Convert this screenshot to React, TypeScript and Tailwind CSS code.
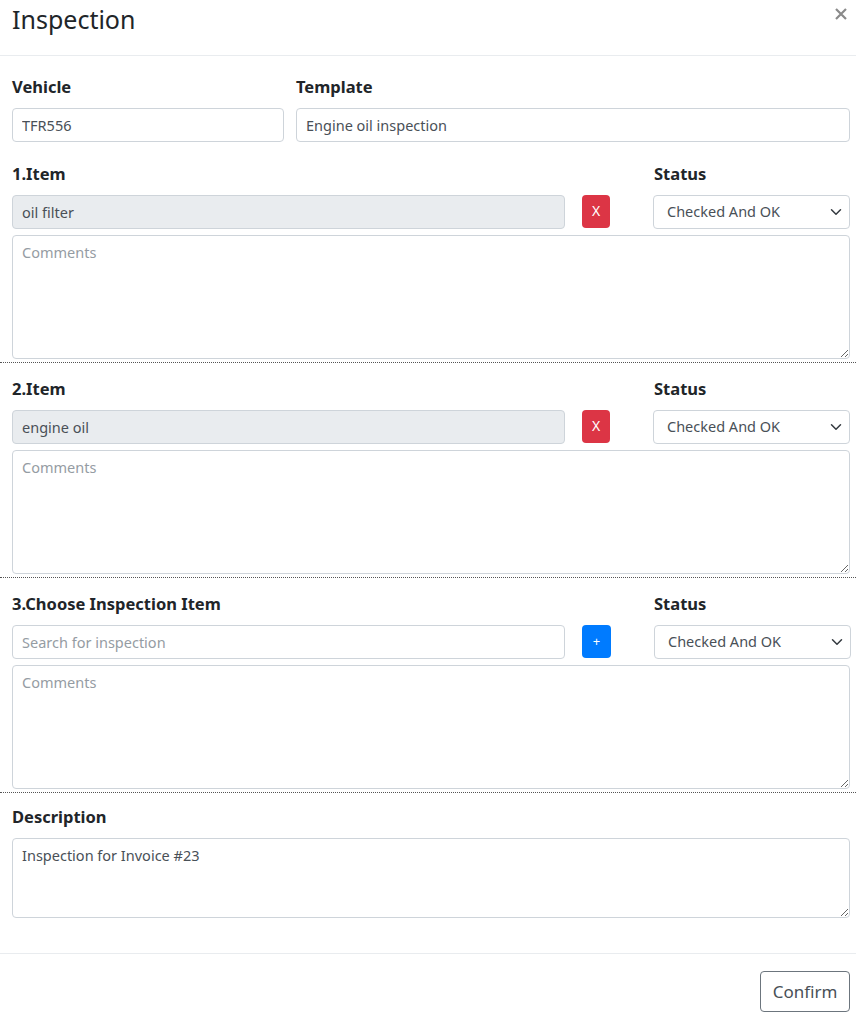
import React from "react";

const font = { fontFamily: '"Noto Sans", "Open Sans", sans-serif' };

function Chevron() {
  return (
    <svg width="12" height="12" viewBox="0 0 16 16" className="absolute right-[8px] top-1/2 -translate-y-1/2 pointer-events-none">
      <path d="M2 5l6 6 6-6" fill="none" stroke="#343a40" strokeWidth="2" strokeLinecap="round" strokeLinejoin="round" />
    </svg>
  );
}

function StatusSelect() {
  return (
    <div className="relative w-[197px]">
      <select
        defaultValue="ok"
        className="appearance-none w-full h-[34px] rounded-[4px] border border-[#ced4da] bg-white pl-[13px] pr-8 text-[14.5px] text-[#495057] outline-none"
      >
        <option value="ok">Checked And OK</option>
        <option value="fix">Needs Attention</option>
      </select>
      <Chevron />
    </div>
  );
}

function ItemSection({
  title,
  value,
  placeholder,
  readOnly,
  btn,
}: {
  title: string;
  value?: string;
  placeholder?: string;
  readOnly: boolean;
  btn: "x" | "plus";
}) {
  return (
    <div className="-ml-3 -mr-[6px] pl-3 pr-[6px] pt-[14px] pb-[3px] border-b border-dotted border-[#555]">
      <div className="flex">
        <div className="w-[553px] shrink-0 text-[16.5px] font-bold leading-[24px] text-[#212529]">{title}</div>
        <div className="ml-[89px] text-[16.5px] font-bold leading-[24px] text-[#212529]">Status</div>
      </div>
      <div className="flex items-center mt-[9px]">
        <input
          readOnly={readOnly}
          defaultValue={value}
          placeholder={placeholder}
          className={`w-[553px] shrink-0 h-[34px] rounded-[4px] border border-[#ced4da] px-[9px] text-[14.5px] text-[#495057] placeholder:text-[#959ca3] outline-none ${
            readOnly ? "bg-[#e9ecef]" : "bg-white"
          }`}
        />
        {btn === "x" ? (
          <button className="ml-[17px] shrink-0 w-[28px] h-[33px] -mt-[2px] rounded-[4px] bg-[#dc3545] text-white text-[14px] leading-none">
            X
          </button>
        ) : (
          <button className="ml-[17px] shrink-0 w-[29px] h-[33px] -mt-[2px] rounded-[4px] bg-[#007bff] text-white text-[13px] leading-none">
            +
          </button>
        )}
        <div className="ml-[43px] shrink-0">
          <StatusSelect />
        </div>
      </div>
      <textarea
        placeholder="Comments"
        className="block w-full h-[124px] mt-[6px] rounded-[4px] border border-[#ced4da] px-[9px] py-[6px] text-[14.5px] text-[#495057] placeholder:text-[#959ca3] outline-none"
      />
    </div>
  );
}

export default function App() {
  return (
    <div className="w-[856px] h-[1024px] bg-white overflow-hidden" style={font}>
      <div className="h-[56px] border-b border-[#e9ecef] pl-3 pr-[9px] flex justify-between">
        <div className="text-[25px] leading-[36px] text-[#212529] pt-[1px]">Inspection</div>
        <svg width="12" height="12" viewBox="0 0 12 12" className="mt-[8px]">
          <path d="M1 1l10 10M11 1L1 11" stroke="#8a8a8a" strokeWidth="2.2" strokeLinecap="butt" />
        </svg>
      </div>
      <div className="pl-3 pr-[6px] pt-[19px]">
        <div className="flex gap-3">
          <div className="w-[272px]">
            <div className="text-[16.5px] font-bold leading-[24px] text-[#212529]">Vehicle</div>
            <input
              defaultValue="TFR556"
              className="mt-[9px] w-full h-[34px] rounded-[4px] border border-[#ced4da] px-[9px] text-[14.5px] text-[#495057] outline-none"
            />
          </div>
          <div className="flex-1">
            <div className="text-[16.5px] font-bold leading-[24px] text-[#212529]">Template</div>
            <input
              defaultValue="Engine oil inspection"
              className="mt-[9px] w-full h-[34px] rounded-[4px] border border-[#ced4da] px-[9px] text-[14.5px] text-[#495057] outline-none"
            />
          </div>
        </div>
        <div className="h-[6px]" />
        <ItemSection title="1.Item" value="oil filter" readOnly btn="x" />
        <ItemSection title="2.Item" value="engine oil" readOnly btn="x" />
        <ItemSection title="3.Choose Inspection Item" placeholder="Search for inspection" readOnly={false} btn="plus" />
        <div className="pt-[12px]">
          <div className="text-[16.5px] font-bold leading-[24px] text-[#212529]">Description</div>
          <textarea
            defaultValue="Inspection for Invoice #23"
            className="block mt-[9px] w-full h-[80px] rounded-[4px] border border-[#ced4da] px-[9px] py-[6px] text-[14.5px] text-[#495057] outline-none"
          />
        </div>
      </div>
      <div className="mt-[35px] border-t border-[#e9ecef] pt-[17px] pr-[6px] flex justify-end">
        <button className="w-[90px] h-[41px] rounded-[4px] border border-[#6c757d] text-[17px] text-[#495057]">
          Confirm
        </button>
      </div>
    </div>
  );
}
